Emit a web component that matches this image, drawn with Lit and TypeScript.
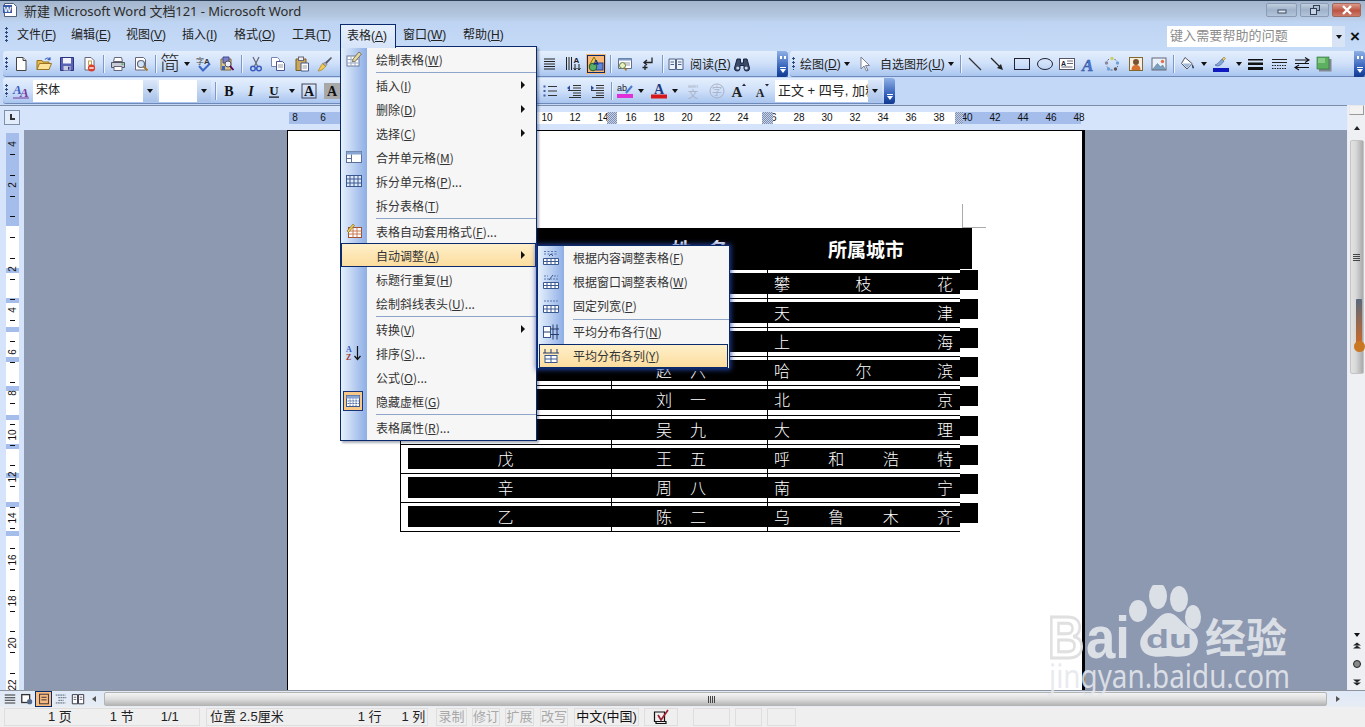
import { LitElement, html, svg, css } from 'lit';
import { customElement } from 'lit/decorators.js';

const ICONS: Record<string, any> = {
  new: svg`<path d="M3.5 1.5h6.5l3 3v10h-9.5z" fill="#fff" stroke="#444"/><path d="M10 1.5v3h3" fill="#ddd" stroke="#444"/>`,
  open: svg`<path d="M1 13.5V4.5h5l1 1.5h6v7.5z" fill="#e8bc50" stroke="#9a7420"/><path d="M1 13.5l2.5-6h12l-2.5 6z" fill="#fbe39a" stroke="#9a7420"/><path d="M9 3.5c1.5-2 4-2 5 0M14 1.2v2.5h-2.4" fill="none" stroke="#3a62c0" stroke-width="1.2"/>`,
  save: svg`<path d="M1.5 1.5h13v13h-13z" fill="#5b63b4" stroke="#2c3280"/><rect x="4" y="2" width="8" height="5.5" fill="#f0f3fb"/><rect x="4.5" y="10" width="7" height="4.5" fill="#c9cde6"/><rect x="9" y="10.7" width="1.5" height="3" fill="#2c3280"/>`,
  perm: svg`<path d="M3 1.5h6l3 3v9.5h-9z" fill="#fff" stroke="#667"/><rect x="6.5" y="5" width="3" height="4" fill="none" stroke="#c8a050"/><circle cx="9.5" cy="12" r="3.6" fill="#d8402c"/><rect x="7.3" y="11.3" width="4.4" height="1.4" fill="#fff"/>`,
  print: svg`<path d="M4.5 1.5h7l1 4h-9z" fill="#fff" stroke="#667"/><path d="M1.5 6.5h13v5h-13z" fill="#c8ccd4" stroke="#556"/><path d="M4 10.5h8v4h-8z" fill="#fff" stroke="#667"/><rect x="11.5" y="7.5" width="2" height="1.2" fill="#35a040"/>`,
  preview: svg`<path d="M2.5 1.5h8l2 2v10.500h-10z" fill="#fff" stroke="#667"/><circle cx="8" cy="8" r="3.500" fill="#cfe4f8" stroke="#667" stroke-width="1.200"/><path d="M10.500 10.500l4 4" stroke="#a07a30" stroke-width="2"/>`,
  spell: svg`<text x="0" y="8" font-size="8" font-family="Noto Sans CJK SC" fill="#444">字</text><text x="8" y="8" font-size="8" font-family="Liberation Sans" font-weight="700" fill="#333">A</text><path d="M3 10l4 4.500 7-7" fill="none" stroke="#4068c8" stroke-width="2"/>`,
  research: svg`<path d="M2 3h10v11h-10z" fill="#d8c890" stroke="#806830"/><path d="M4 1h6v6h-6z" fill="#7a80c8" stroke="#444a90"/><circle cx="9" cy="8" r="3" fill="#eef" stroke="#555"/><path d="M11 10l3.500 4" stroke="#506" stroke-width="1.800"/><rect x="3" y="10" width="3" height="4" fill="#4060b8"/>`,
  cut: svg`<path d="M5 1l4.500 9M11 1l-4.500 9" stroke="#667" stroke-width="1.200" fill="none"/><circle cx="5" cy="12.500" r="2.300" fill="none" stroke="#3a5cc0" stroke-width="1.500"/><circle cx="11" cy="12.500" r="2.300" fill="none" stroke="#3a5cc0" stroke-width="1.500"/>`,
  copy: svg`<path d="M1.500 1.500h6l2 2v7h-8z" fill="#fff" stroke="#7a86b0"/><path d="M6.500 5.500h6l2 2v7h-8z" fill="#fff" stroke="#4a5a90"/><path d="M8 9h5M8 11h5" stroke="#99a"/>`,
  paste: svg`<path d="M2 3h10v11.500h-10z" fill="#c8a860" stroke="#7a5c20"/><rect x="4.500" y="1" width="5" height="3.500" fill="#eee" stroke="#667"/><path d="M7 7h7.500v8h-7.500z" fill="#fff" stroke="#4a5a90"/><path d="M8.500 10h4.500M8.500 12h4.500" stroke="#99a"/>`,
  brush: svg`<path d="M14 1l1 1-5.500 6-1.500-1.500z" fill="#556"/><path d="M8 6.500l2 2-1.500 2-3-3z" fill="#aaa" stroke="#667" stroke-width=".5"/><path d="M5.500 7.500l3 3c-2 3-5 4.500-7.500 4.500 1.500-2 2.500-5 4.500-7.500z" fill="#f0c850" stroke="#a07820" stroke-width=".6"/>`,
  lines: svg`<path d="M3 3h11M3 5.500h11M3 8h11M3 10.500h11M3 13h11" stroke="#222" stroke-width="1.200"/>`,
  colsA: svg`<path d="M1.500 1v13M4 1v13M6.500 1v13" stroke="#222"/><path d="M10 8v6M14 8v6M8.500 12l1.500 2 1.500-2M12.500 12l1.500 2 1.500-2" stroke="#222" fill="none"/><text x="8.500" y="7" font-size="8" font-family="Liberation Sans" font-weight="700" fill="#223">A</text>`,
  shapes: svg`<path d="M6 1l5 9h-10z" fill="#e8d048" stroke="#857010"/><rect x="8" y="7" width="7" height="7" fill="#6088d8" stroke="#203c90"/><circle cx="5" cy="11" r="3.800" fill="#58b068" stroke="#1c6030"/><text x="5" y="9" font-size="8" font-weight="700" font-family="Liberation Sans" fill="#1a2a80">A</text>`,
  docmap: svg`<path d="M1.500 2.500h13v10h-13z" fill="#fff" stroke="#60708a"/><rect x="1.500" y="2.500" width="13" height="2" fill="#7a98c8"/><path d="M7 7h6M7 9h6" stroke="#99a"/><circle cx="5.500" cy="9.500" r="3" fill="#e8f0c0" stroke="#607a40"/><path d="M7.500 12l2 2.500" stroke="#a07a30" stroke-width="1.600"/>`,
  show: svg`<path d="M13 1.500v5h-7.500M8 4l-3 2.500 3 2.500" fill="none" stroke="#222" stroke-width="1.300"/><path d="M6 9v5M3.500 11.500h5" stroke="#222" stroke-width="1.300"/>`,
  book: svg`<path d="M1 3h6.500v10.500h-6.500zM8.500 3h6.500v10.500h-6.500z" fill="#eef2fa" stroke="#50648c"/><path d="M2.500 6h3.500M2.500 8.500h3.500M10 6h3.500M10 8.500h3.500" stroke="#50648c"/>`,
  bino: svg`<path d="M3 3h3.500v4h3v-4h3.500l2.500 9a2.500 2.500 0 0 1-5.500 0.500v-3h-4v3a2.500 2.500 0 0 1-5.500-0.500z" fill="#3a4a68" stroke="#1a2440"/><circle cx="3.800" cy="12" r="1.600" fill="#c8d4e8"/><circle cx="12.200" cy="12" r="1.600" fill="#c8d4e8"/>`,
  cursor: svg`<path d="M5 1v12l3-3 2.500 5 1.500-.8-2.500-4.700h4z" fill="#fff" stroke="#7a8090"/>`,
  line: svg`<path d="M2 2l12 12" stroke="#333" stroke-width="1.200"/>`,
  arrow: svg`<path d="M2 2l9 9" stroke="#222" stroke-width="1.300"/><path d="M14 14l-6-2 4-4z" fill="#222"/>`,
  rect: svg`<rect x="0.500" y="2.500" width="15" height="11" fill="none" stroke="#223"/>`,
  ellipse: svg`<ellipse cx="8" cy="8" rx="7.500" ry="5.500" fill="none" stroke="#223"/>`,
  textbox: svg`<rect x="0.500" y="2.500" width="15" height="11" fill="#fff" stroke="#556"/><text x="2" y="9.500" font-size="7" font-weight="700" font-family="Liberation Sans" fill="#223">A</text><path d="M8 5h6M8 7.500h6M2.500 11h11" stroke="#667"/>`,
  wordart: svg`<text x="1" y="15" font-size="17" font-style="italic" font-weight="700" font-family="Liberation Serif" fill="#4a78d0" stroke="#284a98" stroke-width=".4">A</text>`,
  diagram: svg`<circle cx="8" cy="2.500" r="1.700" fill="#c8d060"/><circle cx="13.500" cy="7" r="1.700" fill="#70a0d8"/><circle cx="11.500" cy="13" r="1.700" fill="#555"/><circle cx="4.500" cy="13" r="1.700" fill="#70a0d8"/><circle cx="2.500" cy="7" r="1.700" fill="#889"/><path d="M10.500 3l1.500 1.500M14 10l-1 1.200M8.500 14h-2M3 10.500l.8 1M3.500 4.500l1.500-1.500" stroke="#667"/>`,
  clip: svg`<rect x="1.500" y="1.500" width="13" height="13" fill="#f6efe0" stroke="#806830"/><circle cx="8" cy="6" r="3" fill="#7a5030"/><path d="M3.500 14c0-4 2-5 4.500-5s4.500 1 4.500 5z" fill="#d87030"/>`,
  pic: svg`<rect x="1" y="2" width="14" height="12" fill="#e8f0fa" stroke="#667"/><path d="M1.500 13.500l5-6 3 3.500 2-2 3 4.500z" fill="#78a0c0" stroke="#506880" stroke-width=".5"/><circle cx="11.500" cy="5.500" r="1.700" fill="#e07050"/>`,
  fill: svg`<path d="M5 1.500l7 6-5 5.500-5.500-5.500z" fill="#fff" stroke="#556"/><path d="M12 8c2 2 2.500 4 1.500 4.500s-2-1.500-1.500-4.500z" fill="#3a4a68"/><path d="M2.500 7.500h8l-3.500 4.500z" fill="#a0b8d8"/>`,
  lcolor: svg`<path d="M2 9c3-1 4-3 7-6l2 2c-2 3-4 5-7 5z" fill="#88a8d8" stroke="#405890" stroke-width=".6"/><path d="M9 3l2-2 1.500 1.500-2 2z" fill="#e8c860" stroke="#806820" stroke-width=".5"/><rect x="0" y="12" width="16" height="4" fill="#1018c0"/>`,
  lstyle: svg`<rect x="1" y="3" width="15" height="1.500" fill="#111"/><rect x="1" y="6.500" width="15" height="2.500" fill="#111"/><rect x="1" y="11" width="15" height="3" fill="#111"/>`,
  dash: svg`<path d="M1 3.500h15M1 6.500h15" stroke="#222"/><path d="M1 9.500h15M1 12.500h15" stroke="#222" stroke-dasharray="1.500 1"/>`,
  astyle: svg`<path d="M1 4h14M11 1.500l4 2.500-4 2.500M15 11.500h-14M5 9l-4 2.500 4 2.500M1 7.500h14" fill="none" stroke="#111" stroke-width="1.100"/>`,
  shadow: svg`<rect x="3" y="3" width="12.500" height="12.500" fill="#808890"/><rect x="1" y="1" width="12" height="12" fill="#5cb060" stroke="#2a6c38" stroke-width=".6"/><rect x="2" y="2" width="7" height="5" fill="#88cc88"/>`,
  style44: svg`<text x="0" y="11" font-size="13" font-style="italic" font-weight="700" font-family="Liberation Serif" fill="#3a5cc0">A</text><text x="7" y="14" font-size="13" font-style="italic" font-weight="700" font-family="Liberation Serif" fill="#7a3aa0">A</text><rect x="0" y="14.500" width="16" height="1" fill="#7a3aa0"/>`,
  bold: svg`<text x="8" y="13" text-anchor="middle" font-size="14" font-weight="700" font-family="Liberation Serif" fill="#111">B</text>`,
  italic: svg`<text x="8" y="13" text-anchor="middle" font-size="14" font-weight="700" font-style="italic" font-family="Liberation Serif" fill="#111">I</text>`,
  under: svg`<text x="8" y="12" text-anchor="middle" font-size="13" font-weight="700" font-family="Liberation Serif" fill="#111">U</text><rect x="3" y="13.500" width="10" height="1.200" fill="#111"/>`,
  abox: svg`<rect x="1" y="1" width="14" height="14" fill="none" stroke="#445"/><text x="8" y="13" text-anchor="middle" font-size="14" font-weight="700" font-family="Liberation Serif" fill="#111">A</text>`,
  ashade: svg`<rect x="0" y="0" width="16" height="16" fill="#a8a8a8"/><text x="8" y="13" text-anchor="middle" font-size="14" font-weight="700" font-family="Liberation Serif" fill="#111">A</text>`,
  list: svg`<path d="M6 3.500h9M6 8h9M6 12.500h9" stroke="#333"/><path d="M1.500 2.500h2v2h-2zM1.500 7h2v2h-2zM1.500 11.500h2v2h-2z" fill="#4060a8"/>`,
  outdent: svg`<path d="M7 2.500h8M7 5h8M2 7.500h13M7 10h8M7 12.500h8M3 14.500h12" stroke="#333"/><path d="M1 5l3-2.500v5z" fill="#2a48a0"/>`,
  indent: svg`<path d="M7 2.500h8M7 5h8M2 7.500h13M7 10h8M7 12.500h8M3 14.500h12" stroke="#333"/><path d="M5 5l-3-2.500v5z" fill="#2a48a0"/>`,
  hilite: svg`<text x="0" y="8" font-size="9" font-family="Liberation Sans" fill="#223">ab</text><path d="M9 10l6-7" stroke="#4a78d0" stroke-width="2"/><rect x="0" y="11" width="16" height="4" fill="#e030d8"/>`,
  acolor: svg`<text x="8" y="11" text-anchor="middle" font-size="14" font-weight="700" font-family="Liberation Serif" fill="#223a80">A</text><rect x="0" y="11.500" width="16" height="4" fill="#d81818"/>`,
  wen: svg`<text x="8" y="4.500" text-anchor="middle" font-size="5.500" font-family="Liberation Sans" fill="#a8b0c4">wén</text><text x="8" y="15" text-anchor="middle" font-size="10" font-family="Noto Sans CJK SC" fill="#a8b0c4">文</text>`,
  zi: svg`<circle cx="8" cy="8" r="7" fill="none" stroke="#a8b0c4"/><text x="8" y="12" text-anchor="middle" font-size="10" font-family="Noto Sans CJK SC" fill="#a8b0c4">字</text>`,
  agrow: svg`<text x="7" y="14" text-anchor="middle" font-size="15" font-weight="700" font-family="Liberation Serif" fill="#222">A</text><path d="M12 3l4 0-2-2.500z" fill="#223"/>`,
  ashrink: svg`<text x="7" y="14" text-anchor="middle" font-size="12" font-weight="700" font-family="Liberation Serif" fill="#222">A</text><path d="M12 1l4 0-2 2.500z" fill="#223"/>`,
  mPencil: svg`<rect x="1" y="5" width="12" height="10" fill="#fff" stroke="#6c7c9c"/><path d="M1 8.500h12M5 5v10M9 5v10M1 12h12" stroke="#9aaac8"/><path d="M7 8l6-7 2.500 2-6 7-3 1z" fill="#e8d8a0" stroke="#776"/>`,
  mMerge: svg`<rect x="0.500" y="2.500" width="15" height="11" fill="#fff" stroke="#5a7098"/><rect x="0.500" y="2.500" width="15" height="3" fill="#88a4d0"/><path d="M5.500 5.500v8M0.500 9.500h5" stroke="#5a7098"/>`,
  mSplit: svg`<rect x="0.500" y="2.500" width="15" height="11" fill="#dde8f8" stroke="#3a5890"/><path d="M4 2.500v11M8 2.500v11M12 2.500v11M0.500 6h15M0.500 10h15" stroke="#3a5890"/>`,
  mAuto: svg`<rect x="2.500" y="4.500" width="13" height="10" fill="#fff" stroke="#a05030"/><path d="M2.500 8h13M7 4.500v10M11 4.500v10M2.500 11h13" stroke="#c87850"/><path d="M1 8l6-7 1.500 1.500-6 7z" fill="#e8c850" stroke="#806820" stroke-width=".6"/>`,
  mSort: svg`<text x="0" y="7" font-size="8" font-weight="700" font-family="Liberation Serif" fill="#3a5cc0">A</text><text x="0" y="15" font-size="8" font-weight="700" font-family="Liberation Serif" fill="#a03a30">Z</text><path d="M11.500 1v13M8.500 11l3 3.500 3-3.500" fill="none" stroke="#111" stroke-width="1.200"/>`,
  mHide: svg`<rect x="1.500" y="2.500" width="13" height="11" fill="#fff" stroke="#3a5890"/><rect x="1.500" y="2.500" width="13" height="3" fill="#88a4d0"/><path d="M1.500 8h13M1.500 10.500h13M5 5.500v8M8 5.500v8M11 5.500v8" stroke="#4a68a0" stroke-dasharray="1 .6"/>`,
  sFit: svg`<path d="M0.500 8.500h15v6h-15zM0.500 11.500h15M4 8.500v6M8 8.500v6M12 8.500v6" fill="#fff" stroke="#3a5890"/><path d="M1 4h14M1 1.500h14" stroke="#5a78b0" stroke-dasharray="2 1.500"/><path d="M6 6l2-2 2 2" fill="none" stroke="#3a5890"/>`,
  sWin: svg`<path d="M0.500 8.500h15v6h-15zM0.500 11.500h15M4 8.500v6M8 8.500v6M12 8.500v6" fill="#fff" stroke="#3a5890"/><path d="M1 2h4M11 2h4M1 5h14" stroke="#5a78b0" stroke-dasharray="2 1"/><path d="M6 6l4-5" stroke="#3a5890"/>`,
  sFix: svg`<path d="M0.500 7.500h15v7h-15zM0.500 11h15M4 7.500v7M8 7.500v7M12 7.500v7" fill="#fff" stroke="#3a5890"/><path d="M1 3h14" stroke="#5a78b0" stroke-dasharray="2 1"/>`,
  sRows: svg`<rect x="0.500" y="2.500" width="7" height="11" fill="#fff" stroke="#3a5890"/><path d="M0.500 8h7M10 0.500v15M14 0.500v15M7.500 5h8.500M7.500 10.500h8.500" stroke="#223a68" fill="none"/>`,
  sCols: svg`<path d="M2 1v4M8 1v4M14 1v4M0 5h16" stroke="#223a68"/><rect x="2" y="7.500" width="12" height="7" fill="#fff" stroke="#3a5890"/><path d="M8 7.500v7M2 11h12" stroke="#3a5890"/>`,
  vNormal: svg`<path d="M2 3.500h12M2 6.500h12M2 9.500h12M2 12.500h12" stroke="#333" stroke-width="1.200"/>`,
  vWeb: svg`<rect x="2" y="3" width="9" height="9" fill="#fff" stroke="#333" stroke-width="1.500"/><circle cx="11" cy="11" r="3" fill="#54688c"/>`,
  vPrint: svg`<rect x="3" y="2.500" width="10" height="11" fill="none" stroke="#223"/><path d="M5 6h6M5 9h6" stroke="#223"/>`,
  vOutline: svg`<path d="M2 3.500h11M5 6.500h9M5 9.500h6M2 12.500h11" stroke="#456" stroke-dasharray="2 .6"/>`,
  vRead: svg`<path d="M1.500 3h6v10.500h-6zM8.500 3h6v10.500h-6z" fill="#fff" stroke="#223"/><path d="M3 6h3M3 8.500h3M10 6h3M10 8.500h3" stroke="#556"/>`,
  spellBook: svg`<path d="M1.500 3h10v9.500h-10zM3 12.500h10v2h-10z" fill="#eee" stroke="#111" stroke-width="1.200"/><path d="M5 6l3 5 7-10" fill="none" stroke="#a02030" stroke-width="1.700"/>`,
};

const icon = (name: string, cls = 'ic') => html`<svg class=${cls} viewBox="0 0 16 16">${ICONS[name]}</svg>`;
const label = (text: string, key: string, tail = '') => html`${text}(<u>${key}</u>)${tail}`;

// [kind, slot width]: "|" separator, ">" dropdown arrow, "t:" text, "*" pressed icon, "" filler
const STANDARD: [string, number][] = [
  ['new', 23], ['open', 23], ['save', 23], ['perm', 23], ['|', 5], ['print', 23], ['preview', 23], ['|', 6],
  ['c:简', 24], ['>', 10], ['spell', 24], ['research', 22], ['|', 7], ['cut', 21], ['copy', 24], ['paste', 23], ['brush', 24],
  ['', 200], ['lines', 24], ['colsA', 23], ['*shapes', 23], ['|', 7], ['docmap', 21], ['show', 24], ['|', 6], ['book', 22],
  ['t:阅读:R', 41], ['bino', 28],
];
const DRAWING: [string, number][] = [
  ['t:绘图:D', 45], ['>', 9], ['cursor', 26], ['t:自选图形:U', 69], ['>', 9], ['|', 10], ['line', 19], ['arrow', 26], ['rect', 23],
  ['ellipse', 23], ['textbox', 22], ['wordart', 22], ['diagram', 23], ['clip', 25], ['pic', 22], ['|', 6], ['fill', 24], ['>', 8],
  ['lcolor', 26], ['>', 9], ['lstyle', 24], ['dash', 23], ['astyle', 23], ['shadow', 21],
];
const FORMAT_A: [string, number][] = [['style44', 23]];
const FORMAT_B: [string, number][] = [
  ['|', 8], ['bold', 19], ['italic', 26], ['under', 20], ['>', 16], ['abox', 18], ['ashade', 28], ['', 192], ['list', 24], ['outdent', 24],
  ['indent', 22], ['|', 6], ['hilite', 22], ['>', 10], ['acolor', 26], ['>', 6], ['wen', 30], ['zi', 18], ['agrow', 24], ['ashrink', 22],
];

const MENUS: [string, string, number][] = [
  ['文件', 'F', 54], ['编辑', 'E', 55], ['视图', 'V', 56], ['插入', 'I', 52], ['格式', 'O', 58], ['工具', 'T', 55], ['表格', 'A', 56], ['窗口', 'W', 60], ['帮助', 'H', 60],
];

type Item = { t?: string; k?: string; tail?: string; ic?: string; sub?: boolean; hot?: boolean; box?: boolean; sep?: boolean };
const TABLE_MENU: Item[] = [
  { t: '绘制表格', k: 'W', ic: 'mPencil' }, { sep: true },
  { t: '插入', k: 'I', sub: true }, { t: '删除', k: 'D', sub: true }, { t: '选择', k: 'C', sub: true },
  { t: '合并单元格', k: 'M', ic: 'mMerge' }, { t: '拆分单元格', k: 'P', tail: '...', ic: 'mSplit' }, { t: '拆分表格', k: 'T' }, { sep: true },
  { t: '表格自动套用格式', k: 'F', tail: '...', ic: 'mAuto' }, { t: '自动调整', k: 'A', sub: true, hot: true },
  { t: '标题行重复', k: 'H' }, { t: '绘制斜线表头', k: 'U', tail: '...' }, { sep: true },
  { t: '转换', k: 'V', sub: true }, { t: '排序', k: 'S', tail: '...', ic: 'mSort' }, { t: '公式', k: 'O', tail: '...' },
  { t: '隐藏虚框', k: 'G', ic: 'mHide', box: true }, { sep: true }, { t: '表格属性', k: 'R', tail: '...' },
];
const FIT_MENU: Item[] = [
  { t: '根据内容调整表格', k: 'F', ic: 'sFit' }, { t: '根据窗口调整表格', k: 'W', ic: 'sWin' }, { t: '固定列宽', k: 'P', ic: 'sFix' }, { sep: true },
  { t: '平均分布各行', k: 'N', ic: 'sRows' }, { t: '平均分布各列', k: 'Y', ic: 'sCols', hot: true },
];

const ROWS: [string, string[], string[]][] = [
  ['', [], ['攀', '枝', '花']], ['', [], ['天', '津']], ['', [], ['上', '海']], ['', ['赵', '六'], ['哈', '尔', '滨']],
  ['', ['刘', '一'], ['北', '京']], ['', ['吴', '九'], ['大', '理']], ['戊', ['王', '五'], ['呼', '和', '浩', '特']],
  ['辛', ['周', '八'], ['南', '宁']], ['乙', ['陈', '二'], ['乌', '鲁', '木', '齐']],
];

const STATUS_OFF: [string, number, number][] = [['录制', 31, 5], ['修订', 28, 5], ['扩展', 29, 6], ['改写', 28, 6]];

const H_LABELS = [-8, -6, 10, 12, 14, 16, 18, 20, 22, 24, 26, 28, 30, 32, 34, 36, 38, 40, 42, 44, 46, 48];
const V_LABELS = [-4, -2, 2, 4, 6, 8, 10, 12, 14, 16, 18, 20, 22];
const V_MARKS = [268, 298, 327, 357, 386, 415, 444, 473, 502, 531];
const V_TICKS = Array.from({ length: 26 }, (_, i) => 154 + i * 20.75);

@customElement('app-root')
export class AppRoot extends LitElement {
  static styles = css`
    :host {
      display: flex;
      flex-direction: column;
      position: relative;
      width: 1365px;
      height: 727px;
      overflow: hidden;
      background: #c4daf7;
      color: #222;
      font: 12px 'Liberation Sans', 'Noto Sans CJK SC', sans-serif;
    }
    u { text-decoration: underline; text-underline-offset: 1px; }
    .ic { width: 16px; height: 16px; display: block; flex: none; overflow: visible; }

    .title {
      height: 22px;
      box-sizing: border-box;
      border-top: 1px solid #2c4058;
      padding-bottom: 3px;
      background: linear-gradient(#a3b6cd, #b4c7e0 70%, #bed3f0);
      display: flex;
      align-items: center;
      font: 13px 'Noto Sans', 'Noto Sans CJK SC', sans-serif;
      letter-spacing: -.06px;
      color: #2b2b2b;
    }
    .appicon { margin: 0 6px 0 2px; }
    .title .name { flex: 1; }
    .winbtn {
      width: 29px;
      height: 14px;
      margin-right: 3px;
      box-sizing: border-box;
      border: 1px solid #8a9cb4;
      border-radius: 2px;
      background: linear-gradient(#c0cede, #9fb2ca 50%, #b2c4da);
      display: flex;
      align-items: center;
      justify-content: center;
    }
    .winbtn.wide { width: 31px; }
    .winbtn.close { background: linear-gradient(#dc9a8a, #bd5442 55%, #cc7a68); border-color: #a0685c; margin-right: 4px; color: #fff; }
    .winbtn svg { width: 14px; height: 12px; }

    .menubar { height: 29px; display: flex; align-items: flex-start; background: linear-gradient(#bed4f3, #c6dbf7); }
    .grip { width: 6px; flex: none; align-self: stretch; margin: 4px 0; background: radial-gradient(circle at 1.500px 1.500px, #2a4a80 1.100px, transparent 1.300px) 2px 0 / 4px 4px repeat-y; }
    .menubar .grip { height: 16px; flex: none; align-self: flex-start; margin: 5px 0 0 3px; width: 7px; }
    .mi { height: 23px; margin-top: 2px; box-sizing: border-box; padding-left: 7px; line-height: 23px; flex: none; }
    .mi.open { background: linear-gradient(#e6effc, #d6e4f9); border: 1px solid #0a2a6e; border-bottom: none; padding-left: 6px; height: 24px; line-height: 22px; z-index: 3; position: relative; }
    .help { margin-left: auto; display: flex; align-items: center; margin-top: 4px; height: 21px; }
    .help .box { width: 165px; height: 21px; background: #fff; color: #8c8c8c; line-height: 20px; padding-left: 3px; box-sizing: border-box; font-size: 13px; letter-spacing: .1px; }
    .help .drop { width: 13px; height: 21px; background: #d8e4f6; display: flex; align-items: center; justify-content: center; }
    .help .x { width: 20px; text-align: center; font-size: 17px; color: #111; font-weight: 700; }
    .tri { width: 0; height: 0; border: 3px solid transparent; border-top: 4px solid #111; border-bottom: none; }

    .bars { height: 27px; display: flex; flex: none; padding-left: 3px; background: #c2d8f6; }
    .bar {
      display: flex;
      align-items: center;
      height: 26px;
      box-sizing: border-box;
      border-bottom: 1px solid #6f8ab8;
      border-radius: 3px 0 0 3px;
      background: linear-gradient(#e4effd, #cfe0f9 50%, #a9c5ef);
    }
    .bar .grip { margin: 6px 0; }
    .slot { display: flex; align-items: center; justify-content: center; height: 100%; flex: none; }
    .slot.on svg { background: #f8b878; outline: 1px solid #0a2a6e; box-shadow: 0 0 0 2px #f8b878; }
    .slot.text { justify-content: flex-start; padding-left: 3px; box-sizing: border-box; white-space: nowrap; }
    .slot.big { font-size: 20px; line-height: 20px; font-weight: 300; }
    .vsep { width: 1px; height: 18px; background: #7f99c4; box-shadow: 1px 0 #eef4fe; }
    .chev { width: 11px; height: 26px; flex: none; margin-left: auto; border-radius: 0 3px 3px 0; background: linear-gradient(#8fb0e6, #2a58b4 70%, #12398e); display: flex; flex-direction: column; align-items: center; justify-content: space-between; padding: 5px 0 4px; box-sizing: border-box; }
    .chev em { display: block; width: 6px; height: 3px; background: repeating-linear-gradient(90deg, #fff 0 2px, transparent 2px 4px); }
    .chev span { display: flex; flex-direction: column; align-items: center; }
    .chev i { display: block; width: 6px; height: 1px; background: #fff; margin-bottom: 1px; }
    .chev .tri { border-top-color: #fff; }
    .combo { height: 22px; display: flex; flex: none; background: #fff; box-sizing: border-box; }
    .combo span { flex: 1; line-height: 21px; padding-left: 3px; overflow: hidden; white-space: nowrap; }
    .combo b { width: 14px; background: linear-gradient(#dbe7f9, #a8c2ea); display: flex; align-items: center; justify-content: center; }
    .font { width: 124px; margin: 0 2px 0 1px; }
    .size { width: 52px; }
    .fmt { width: 107px; margin: 0 2px 0 3px; }
    .fmt span { font-size: 13px; }

    .work { flex: 1; display: flex; min-height: 0; }
    .left { flex: 1; display: flex; flex-direction: column; min-width: 0; }

    .hruler { height: 25px; flex: none; box-sizing: border-box; border-top: 1px solid #7d8ea8; background: #d5e4fb; position: relative; }
    .corner { position: absolute; left: 4px; top: 4px; width: 16px; height: 15px; box-sizing: border-box; border: 1px solid #7f90ab; background: #e2ecfb; }
    .corner::after { content: ''; position: absolute; left: 5px; top: 3px; width: 3px; height: 4px; border-left: 2px solid #333; border-bottom: 2px solid #333; }
    .scale { position: absolute; left: 289px; top: 6px; width: 792px; height: 12px; display: flex; }
    .scale .blue { background: #a4bdea; }
    .scale .white { background: #fff; }
    .num { position: absolute; top: 0; width: 20px; margin-left: -10px; text-align: center; font-size: 10px; line-height: 12px; color: #111; }
    .mark { position: absolute; top: 0; height: 12px; background: #a8bbdc repeating-conic-gradient(#7f8fb0 0 25%, #c4d0e8 0 50%) 0 0 / 2px 2px; }

    .below { flex: 1; display: flex; min-height: 0; }
    .vruler { width: 24px; flex: none; background: #d5e4fb; position: relative; }
    .vtrack { position: absolute; left: 6px; top: 3px; bottom: 0; width: 13px; background: #fff; }
    .vtrack .top { height: 93px; background: #a4bdea; }
    .vmark { position: absolute; left: 0; width: 13px; height: 5px; background: #a4bdea; }
    .vtick { position: absolute; left: 4px; width: 5px; height: 1px; background: #111; }
    .vnum { position: absolute; left: -3px; width: 20px; height: 12px; margin-top: -6px; text-align: center; font-size: 10px; line-height: 12px; color: #111; transform: rotate(-90deg); }

    .doc { flex: 1; min-width: 0; overflow: hidden; background: #8d98b1; padding-left: 263px; }
    .page {
      width: 798px;
      height: 700px;
      box-sizing: border-box;
      border-left: 1px solid #000;
      border-top: 1px solid #000;
      border-right: 3px solid #000;
      background: #fff;
      padding: 97px 0 0 112px;
      position: relative;
    }
    .crop { position: absolute; left: 674px; top: 73px; width: 23px; height: 23px; border-left: 1px solid #aaa; border-bottom: 1px solid #aaa; }
    .thead {
      width: 572px;
      height: 41px;
      background: #000;
      color: #fff;
      display: grid;
      grid-template-columns: 272px 156px 144px;
      align-items: center;
      font: 700 19px/41px 'Noto Sans CJK SC', sans-serif;
    }
    .thead .n { display: flex; gap: 18px; }
    .row {
      position: relative;
      width: 560px;
      height: 29.110px;
      box-sizing: border-box;
      padding: 3px 0 0 7px;
      border-top: 1px solid #000;
      border-left: 1px solid #000;
      background:
        linear-gradient(#000, #000) 210px 0 / 1px 100% no-repeat,
        linear-gradient(#000, #000) 366px 0 / 1px 100% no-repeat;
    }
    .row.last { height: 30px; border-bottom: 1px solid #000; }
    .strip {
      height: 21px;
      background: #000;
      color: #fff;
      display: grid;
      grid-template-columns: 203px 156px 193px;
      font: 300 16px/21px 'Noto Sans CJK SC', sans-serif;
    }
    .c1 { text-align: center; padding-right: 8px; }
    .c2 { display: flex; gap: 18px; padding-left: 45px; }
    .c3 { display: flex; justify-content: space-between; padding: 0 7px; }
    .tab { position: absolute; left: 559px; top: 0; width: 18px; height: 20px; background: #000; }

    .vscroll { width: 18px; flex: none; background: #eef0f4; border-left: 1px solid #e8edf6; box-sizing: border-box; display: flex; flex-direction: column; align-items: center; position: relative; }
    .split { width: 15px; height: 10px; flex: none; box-sizing: border-box; background: #f2f2f2; border: 1px solid #9a9a9a; border-top-color: #e8e8e8; border-left-color: #e8e8e8; }
    .vbtn { height: 25px; flex: none; display: flex; align-items: center; justify-content: center; }
    .vbtn.low { height: 14px; }
    .tri.up { border: 3px solid transparent; border-bottom: 4px solid #222; border-top: none; }
    .thumb { width: 14px; height: 234px; flex: none; box-sizing: border-box; background: linear-gradient(90deg, #e2e2e2, #d8d8d8 40%, #a9a9a9); border: 1px solid #c4c4c4; border-radius: 2px; display: flex; align-items: center; justify-content: center; }
    .thumb i { display: block; width: 7px; height: 7px; background: repeating-linear-gradient(#444 0 1px, transparent 1px 2px); }
    .vrest { flex: 1; }
    .vnav { flex: none; display: flex; flex-direction: column; align-items: center; gap: 11px; padding: 0 0 4px; }
    .vnav svg { width: 8px; height: 7px; display: block; }
    .vnav svg.dot { height: 8px; }
    .ball { position: absolute; left: 8px; top: 194px; width: 6px; height: 44px; background: linear-gradient(#58687c, #c8682a); border-radius: 1px; }
    .ball::after { content: ''; position: absolute; left: -2px; top: 42px; width: 11px; height: 11px; border-radius: 50%; background: #c97722; }

    .hscroll { height: 17px; flex: none; display: flex; align-items: center; background: linear-gradient(#dfe9f8, #e8edf4); border-top: 1px solid #8f959d; box-sizing: border-box; padding-left: 1px; }
    .view { width: 17px; height: 16px; display: flex; align-items: center; justify-content: center; flex: none; }
    .view.on { background: #f8bc80; outline: 1px solid #0a2a6e; outline-offset: -1px; }
    .view svg { width: 14px; height: 14px; }
    .hleft { width: 16px; flex: none; display: flex; justify-content: center; }
    .tri.lt { border: 3px solid transparent; border-right: 4px solid #555; border-left: none; }
    .tri.rt { border: 3px solid transparent; border-left: 4px solid #555; border-right: none; }
    .htrack { width: 1223px; margin-left: 2px; height: 14px; box-sizing: border-box; flex: none; border: 1px solid #b4b4b4; border-radius: 2px; background: linear-gradient(#f4f4f4, #dedede 50%, #b6b6b6); display: flex; align-items: center; justify-content: center; padding-right: 8px; }
    .htrack i { width: 7px; height: 7px; display: block; background: repeating-linear-gradient(90deg, #444 0 1px, transparent 1px 2px); }
    .hright { flex: 1; display: flex; justify-content: center; padding-right: 16px; }

    .status { height: 20px; flex: none; display: flex; background: #efefef; font: 13px/19px 'Liberation Sans', 'Noto Sans CJK SC', sans-serif; color: #222; padding-left: 4px; }
    .panel { flex: none; height: 18px; margin-top: 1px; box-sizing: border-box; border: 1px solid #dedede; white-space: nowrap; line-height: 16px; display: flex; }
    .panel.off { color: #a8a8a8; justify-content: center; }
    .panel.on { color: #111; justify-content: center; }
    .panel svg { margin: 0 auto; }
    .p1 { padding-left: 43px; width: 196px; margin-right: 6px; }
    .p1 .g1 { margin-left: 38px; }
    .p1 .g2 { margin-left: 27px; }
    .p2 { padding-left: 3px; width: 222px; margin-right: 8px; }
    .p2 .g1 { margin-left: 74px; }
    .p2 .g2 { margin-left: 20px; }

    .menu {
      position: absolute;
      z-index: 2;
      box-sizing: border-box;
      border: 1px solid #0a2a6e;
      background: linear-gradient(90deg, #e6f0fc, #8eaee6 26px, #f6f6f6 26px);
      font: 12px 'Noto Sans CJK SC', sans-serif;
      color: #333;
    }
    .table { left: 340px; top: 46px; width: 197px; height: 395px; box-shadow: 2px 2px 2px rgba(20, 30, 60, .35); }
    .fit { left: 537px; top: 245px; width: 193px; height: 124px; box-shadow: 0 0 5px 1px rgba(40, 70, 170, .85); z-index: 4; }
    .it { height: 24px; display: flex; align-items: center; box-sizing: border-box; position: relative; padding-left: 35px; }
    .it .mic { position: absolute; left: 4px; top: 4px; width: 18px; height: 16px; display: flex; align-items: center; justify-content: center; }
    .it .mic.box { left: 2px; top: 2px; width: 20px; height: 20px; background: #f8c888; outline: 1px solid #1a3478; outline-offset: -1px; }
    .it.hot { background: linear-gradient(#fff0cc, #fcdc9c); outline: 1px solid #0a2a6e; outline-offset: -1px; }
    .it .caret { position: absolute; right: 11px; top: 8px; width: 0; height: 0; border: 4px solid transparent; border-left: 4px solid #111; border-right: none; }
    .sp { height: 2px; margin-left: 35px; position: relative; }
    .sp::before { content: ''; position: absolute; left: 0; right: 0; top: 1px; height: 1px; background: #8ea4c8; }
    .fit .it { padding-left: 35px; padding-bottom: 2px; }
    .fit .it.hot { margin: 0 1px; padding-left: 34px; }
    .fit .it.hot .mic { left: 3px; }

    .mark-wm { position: absolute; left: 1040px; top: 585px; z-index: 5; pointer-events: none; }
  `;

  private slots(list: [string, number][]) {
    return list.map(([k, w]) => {
      const st = `width:${w}px`;
      if (k === '') return html`<div class="slot" style=${st}></div>`;
      if (k === '|') return html`<div class="slot" style=${st}><div class="vsep"></div></div>`;
      if (k === '>') return html`<div class="slot" style=${st}><div class="tri"></div></div>`;
      if (k.startsWith('c:')) return html`<div class="slot big" style=${st}>${k.slice(2)}</div>`;
      if (k.startsWith('t:')) {
        const [, a, b] = k.split(':');
        return html`<div class="slot text" style=${st}>${label(a, b)}</div>`;
      }
      if (k.startsWith('*')) return html`<div class="slot on" style=${st}>${icon(k.slice(1))}</div>`;
      return html`<div class="slot" style=${st}>${icon(k)}</div>`;
    });
  }

  private chevron(marks = true) {
    return html`<div class="chev">${marks ? html`<em></em>` : html`<span></span>`}<span><i></i><div class="tri"></div></span></div>`;
  }

  private items(list: Item[]) {
    return list.map((m) =>
      m.sep
        ? html`<div class="sp"></div>`
        : html`<div class="it ${m.hot ? 'hot' : ''}">
            ${m.ic ? html`<div class="mic ${m.box ? 'box' : ''}">${icon(m.ic)}</div>` : ''}
            ${label(m.t!, m.k!, m.tail)}
            ${m.sub ? html`<div class="caret"></div>` : ''}
          </div>`
    );
  }

  private hruler() {
    return html`<div class="hruler">
      <div class="corner"></div>
      <div class="scale">
        <div class="blue" style="width:112px"></div>
        <div class="white" style="width:554px"></div>
        <div class="blue" style="flex:1"></div>
        ${H_LABELS.map((n) => html`<div class="num" style="left:${118 + 14 * n}px">${Math.abs(n)}</div>`)}
        <div class="mark" style="left:318px;width:10px"></div>
        <div class="mark" style="left:473px;width:11px"></div>
        <div class="mark" style="left:666px;width:8px"></div>
      </div>
    </div>`;
  }

  private vruler() {
    return html`<div class="vruler">
      <div class="vtrack">
        <div class="top"></div>
        ${V_MARKS.map((y) => html`<div class="vmark" style="top:${y - 133}px"></div>`)}
        ${V_TICKS.map((y) => html`<div class="vtick" style="top:${y - 133}px"></div>`)}
        ${V_LABELS.map((n) => html`<div class="vnum" style="top:${227 + n * 20.8 - 133}px">${Math.abs(n)}</div>`)}
      </div>
    </div>`;
  }

  private table() {
    return html`
      <div class="thead">
        <span></span>
        <span class="n"><span>姓</span><span>名</span></span>
        <span>所属城市</span>
      </div>
      ${ROWS.map(
        ([a, b, c], i) => html`<div class="row ${i === ROWS.length - 1 ? 'last' : ''}">
          <div class="strip">
            <div class="c1">${a}</div>
            <div class="c2">${b.map((s) => html`<span>${s}</span>`)}</div>
            <div class="c3">${c.map((s) => html`<span>${s}</span>`)}</div>
          </div>
          <div class="tab"></div>
        </div>`
      )}
    `;
  }

  private watermark() {
    const fg = 'rgba(230,232,237,.88)';
    return html`<svg class="mark-wm" width="260" height="125" viewBox="1040 585 260 125">
      <text x="1048" y="658" font-size="60" font-weight="700" font-family="Liberation Sans" textLength="36" lengthAdjust="spacingAndGlyphs" fill="#fff" stroke="#e0e0e0" stroke-width="3">B</text>
      <text x="1086" y="658" font-size="60" font-weight="700" font-family="Liberation Sans" textLength="44" lengthAdjust="spacingAndGlyphs" fill=${fg}>ai</text>
      <ellipse cx="1158" cy="596" rx="9" ry="13" fill=${fg} />
      <ellipse cx="1179" cy="599" rx="9" ry="13" fill=${fg} />
      <ellipse cx="1138" cy="611" rx="9" ry="11" fill=${fg} />
      <ellipse cx="1193" cy="617" rx="8" ry="12" fill=${fg} />
      <path d="M1168 613c8 0 12 8 20 14 10 7 12 14 8 22-4 7-12 9-28 7-14 2-22 0-26-6-4-8-1-15 6-21 8-6 11-16 20-16z" fill=${fg} />
      <text x="1146" y="648" font-size="26" font-weight="700" font-family="Liberation Sans" textLength="46" lengthAdjust="spacingAndGlyphs" fill="#8d98b1">du</text>
      <text x="1205" y="653" font-size="41" font-weight="700" font-family="Noto Sans CJK SC" fill=${fg}>经验</text>
      <text x="1049" y="688" font-size="32" font-family="Noto Sans" textLength="241" lengthAdjust="spacingAndGlyphs" fill=${fg}>jingyan.baidu.com</text>
    </svg>`;
  }

  render() {
    return html`
      <div class="title">
        <svg class="ic appicon" viewBox="0 0 16 16">
          <path d="M2.500 1.500h9l3 3v10h-12z" fill="#fff" stroke="#50607c" />
          <rect x="1" y="3" width="9" height="8" fill="#3a5ca8" />
          <text x="5.500" y="10" text-anchor="middle" font-size="8" font-weight="700" font-family="Liberation Sans" fill="#fff">W</text>
        </svg>
        <span class="name">新建 Microsoft Word 文档121 - Microsoft Word</span>
        <div class="winbtn wide"><svg viewBox="0 0 14 12"><rect x="3" y="6" width="8" height="3" fill="#dfe6ef" stroke="#3f4e62" /></svg></div>
        <div class="winbtn"><svg viewBox="0 0 14 12"><rect x="5.500" y="1.500" width="6" height="5" fill="none" stroke="#2f3e52" /><rect x="2.500" y="4.500" width="6" height="6" fill="#c8d4e4" stroke="#2f3e52" /></svg></div>
        <div class="winbtn close"><svg viewBox="0 0 14 12"><path d="M3 2l8 8M11 2l-8 8" stroke="#fff" stroke-width="2.400" /></svg></div>
      </div>

      <div class="menubar">
        <div class="grip"></div>
        ${MENUS.map(([t, k, w]) => html`<div class="mi ${k === 'A' ? 'open' : ''}" style="width:${w}px">${label(t, k)}</div>`)}
        <div class="help">
          <div class="box">键入需要帮助的问题</div>
          <div class="drop"><div class="tri"></div></div>
          <div class="x">×</div>
        </div>
      </div>

      <div class="bars">
        <div class="bar" style="width:785px">
          <div class="grip"></div>
          ${this.slots(STANDARD)}
          ${this.chevron()}
        </div>
        <div class="bar" style="width:575px;margin-left:2px">
          <div class="grip" style="width:7px"></div>
          ${this.slots(DRAWING)}
          ${this.chevron()}
        </div>
      </div>

      <div class="bars">
        <div class="bar" style="width:891px">
          <div class="grip"></div>
          ${this.slots(FORMAT_A)}
          <div class="combo font"><span>宋体</span><b><div class="tri"></div></b></div>
          <div class="combo size"><span></span><b><div class="tri"></div></b></div>
          ${this.slots(FORMAT_B)}
          <div class="combo fmt"><span>正文 + 四号, 加粗</span><b><div class="tri"></div></b></div>
          ${this.chevron(false)}
        </div>
      </div>

      <div class="work">
        <div class="left">
          ${this.hruler()}
          <div class="below">
            ${this.vruler()}
            <div class="doc">
              <div class="page">
                <div class="crop"></div>
                ${this.table()}
              </div>
            </div>
          </div>
        </div>
        <div class="vscroll">
          <div class="split"></div>
          <div class="vbtn"><div class="tri up"></div></div>
          <div class="thumb"><i></i></div>
          <div class="ball"></div>
          <div class="vrest"></div>
          <div class="vbtn low"><div class="tri"></div></div>
          <div class="vnav">
            <svg viewBox="0 0 8 6"><path d="M4 0l4 3h-8zM4 3l4 3h-8z" fill="#222" /></svg>
            <svg class="dot" viewBox="0 0 8 8"><circle cx="4" cy="4" r="3.500" fill="#888" stroke="#222" /></svg>
            <svg viewBox="0 0 8 6"><path d="M0 0h8l-4 3zM0 3h8l-4 3z" fill="#222" /></svg>
          </div>
        </div>
      </div>

      <div class="hscroll">
        <div class="view">${icon('vNormal')}</div>
        <div class="view">${icon('vWeb')}</div>
        <div class="view on">${icon('vPrint')}</div>
        <div class="view">${icon('vOutline')}</div>
        <div class="view">${icon('vRead')}</div>
        <div class="hleft"><div class="tri lt"></div></div>
        <div class="htrack"><i></i></div>
        <div class="hright"><div class="tri rt"></div></div>
      </div>

      <div class="status">
        <div class="panel p1"><span>1 页</span><span class="g1">1 节</span><span class="g2">1/1</span></div>
        <div class="panel p2"><span>位置 2.5厘米</span><span class="g1">1 行</span><span class="g2">1 列</span></div>
        ${STATUS_OFF.map(([t, w, m]) => html`<div class="panel off" style="width:${w}px;margin-right:${m}px">${t}</div>`)}
        <div class="panel on" style="width:65px;margin-right:5px">中文(中国)</div>
        <div class="panel" style="width:34px;margin-right:15px">${icon('spellBook')}</div>
        <div class="panel" style="width:37px;margin-right:5px"></div>
        <div class="panel" style="width:27px;margin-right:5px"></div>
        <div class="panel" style="width:29px"></div>
      </div>

      <div class="menu table">${this.items(TABLE_MENU)}</div>
      <div class="menu fit">${this.items(FIT_MENU)}</div>
      ${this.watermark()}
    `;
  }
}
